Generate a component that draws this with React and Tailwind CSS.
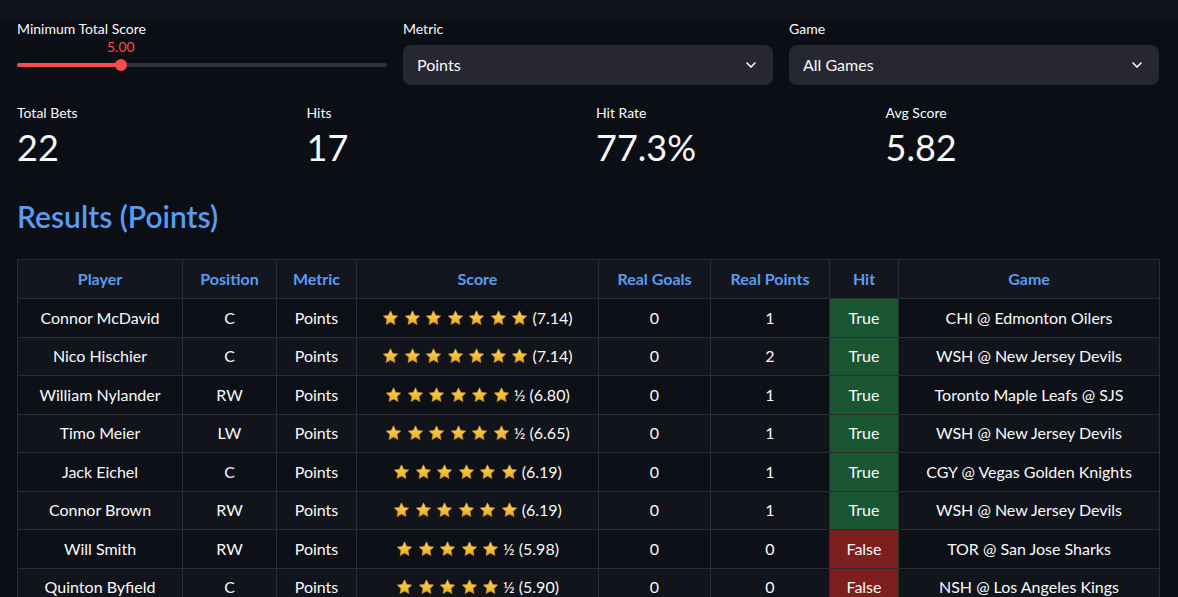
import { ChevronDown } from 'lucide-react';

const rows = [
  { player: 'Connor McDavid', pos: 'C', stars: 7, half: false, score: '7.14', goals: 0, points: 1, hit: true, game: 'CHI @ Edmonton Oilers' },
  { player: 'Nico Hischier', pos: 'C', stars: 7, half: false, score: '7.14', goals: 0, points: 2, hit: true, game: 'WSH @ New Jersey Devils' },
  { player: 'William Nylander', pos: 'RW', stars: 6, half: true, score: '6.80', goals: 0, points: 1, hit: true, game: 'Toronto Maple Leafs @ SJS' },
  { player: 'Timo Meier', pos: 'LW', stars: 6, half: true, score: '6.65', goals: 0, points: 1, hit: true, game: 'WSH @ New Jersey Devils' },
  { player: 'Jack Eichel', pos: 'C', stars: 6, half: false, score: '6.19', goals: 0, points: 1, hit: true, game: 'CGY @ Vegas Golden Knights' },
  { player: 'Connor Brown', pos: 'RW', stars: 6, half: false, score: '6.19', goals: 0, points: 1, hit: true, game: 'WSH @ New Jersey Devils' },
  { player: 'Will Smith', pos: 'RW', stars: 5, half: true, score: '5.98', goals: 0, points: 0, hit: false, game: 'TOR @ San Jose Sharks' },
  { player: 'Quinton Byfield', pos: 'C', stars: 5, half: true, score: '5.90', goals: 0, points: 0, hit: false, game: 'NSH @ Los Angeles Kings' },
];

const font = { fontFamily: 'Lato, "Noto Sans", sans-serif' };

function Star() {
  return (
    <svg width="17" height="16" viewBox="0 0 24 23" className="shrink-0">
      <defs>
        <linearGradient id="sg" x1="0" y1="0" x2="0" y2="1">
          <stop offset="0" stopColor="#ffd957" />
          <stop offset="1" stopColor="#e8a92a" />
        </linearGradient>
      </defs>
      <path
        d="M12 1.2l3.1 6.6 7.2.9-5.3 5 1.4 7.1L12 17.3l-6.4 3.5L7 13.7l-5.3-5 7.2-.9z"
        fill="url(#sg)"
        stroke="#d99a1e"
        strokeWidth="1"
        strokeLinejoin="round"
      />
    </svg>
  );
}

function Select({ label, value }) {
  return (
    <div className="flex flex-col">
      <span className="text-[14px] text-[#fafafa] leading-[14px] mb-[9px]">{label}</span>
      <div className="h-[40px] rounded-[8px] bg-[#262730] flex items-center justify-between pl-[14px] pr-[14px]">
        <span className="text-[16px] text-[#fafafa]">{value}</span>
        <ChevronDown className="w-[16px] h-[16px] text-[#fafafa]" strokeWidth={2.5} />
      </div>
    </div>
  );
}

function Metric({ label, value }) {
  return (
    <div className="flex flex-col">
      <span className="text-[14px] text-[#fafafa] leading-[20px]">{label}</span>
      <span className="text-[36px] text-[#fafafa] leading-[50px] -mt-[1px]">{value}</span>
    </div>
  );
}

export default function App() {
  const headers = ['Player', 'Position', 'Metric', 'Score', 'Real Goals', 'Real Points', 'Hit', 'Game'];
  const widths = ['w-[165px]', 'w-[94px]', 'w-[80px]', 'w-[242px]', 'w-[112px]', 'w-[119px]', 'w-[69px]', 'w-[261px]'];
  return (
    <div className="w-[1178px] h-[597px] overflow-hidden bg-[#0b0e15] text-[#fafafa]" style={font}>
      <div className="h-[22px] bg-[#0f1219]" />
      <div className="pl-[17px] pr-[19px]">
        {/* Filters */}
        <div className="grid grid-cols-3 gap-[16px]">
          <div className="flex flex-col">
            <span className="text-[14px] leading-[14px]">Minimum Total Score</span>
            <div className="relative h-[49px]">
              <span className="absolute left-[90px] top-[2px] text-[14px] leading-[18px] text-[#ff4b4b]">5.00</span>
              <div className="absolute left-0 right-0 top-[27px] h-[4px] rounded-full bg-[#2f3139]" />
              <div className="absolute left-0 w-[104px] top-[27px] h-[4px] rounded-full bg-[#ff4b4b]" />
              <div className="absolute left-[98px] top-[23px] w-[12px] h-[12px] rounded-full bg-[#ff4b4b]" />
            </div>
          </div>
          <Select label="Metric" value="Points" />
          <Select label="Game" value="All Games" />
        </div>

        {/* Metrics */}
        <div className="grid grid-cols-4 gap-[16px] mt-[18px]">
          <Metric label="Total Bets" value="22" />
          <Metric label="Hits" value="17" />
          <Metric label="Hit Rate" value="77.3%" />
          <Metric label="Avg Score" value="5.82" />
        </div>

        <h2 className="text-[30px] font-semibold text-[#5a9cf0] mt-[26px] leading-[36px]">Results (Points)</h2>

        {/* Table */}
        <table className="mt-[25px] border-collapse text-[16px] w-[1142px] table-fixed">
          <thead>
            <tr className="h-[39px] bg-[#13161e]">
              {headers.map((h, i) => (
                <th key={h} className={`${widths[i]} border border-[#2a2d35] text-[#5a9cf0] font-bold text-center`}>{h}</th>
              ))}
            </tr>
          </thead>
          <tbody>
            {rows.map((r, idx) => (
              <tr key={r.player} className={`h-[38.5px] ${idx % 2 === 0 ? 'bg-[#0d1017]' : 'bg-[#11141b]'}`}>
                <td className="border border-[#2a2d35] text-center">{r.player}</td>
                <td className="border border-[#2a2d35] text-center">{r.pos}</td>
                <td className="border border-[#2a2d35] text-center">Points</td>
                <td className="border border-[#2a2d35]">
                  <div className="flex items-center justify-center">
                    <div className="flex items-center gap-[4.5px]">
                      {Array.from({ length: r.stars }).map((_, i) => <Star key={i} />)}
                    </div>
                    <span className="ml-[4px]">{r.half ? '½ ' : ''}({r.score})</span>
                  </div>
                </td>
                <td className="border border-[#2a2d35] text-center">{r.goals}</td>
                <td className="border border-[#2a2d35] text-center">{r.points}</td>
                <td className={`border border-[#2a2d35] text-center ${r.hit ? 'bg-[#1a5632]' : 'bg-[#7d1f1f]'}`}>{r.hit ? 'True' : 'False'}</td>
                <td className="border border-[#2a2d35] text-center">{r.game}</td>
              </tr>
            ))}
          </tbody>
        </table>
      </div>
    </div>
  );
}
